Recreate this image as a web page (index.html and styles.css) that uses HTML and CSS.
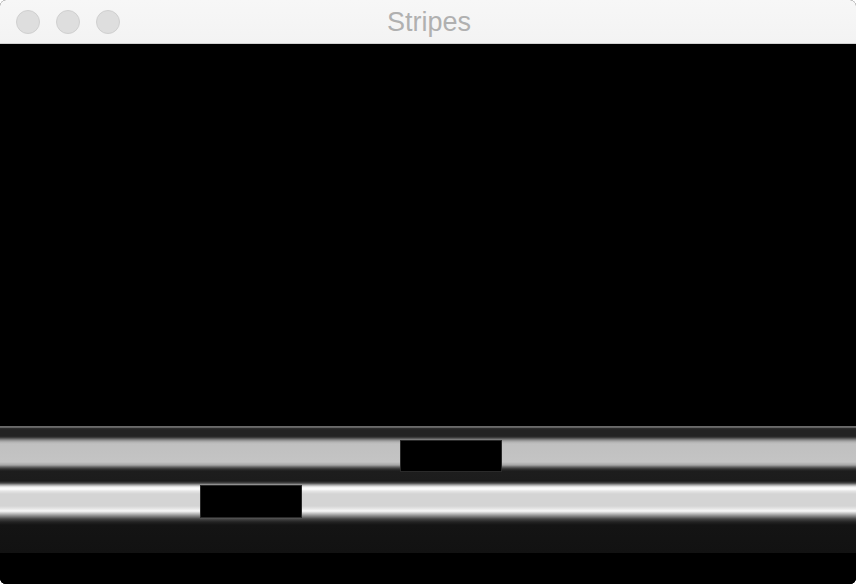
FILE: index.html
```html
<!DOCTYPE html>
<html>
<head>
<meta charset="utf-8">
<title>Stripes</title>
<link rel="stylesheet" href="styles.css">
</head>
<body>
<div class="window">
  <div class="titlebar">
    <div class="lights">
      <span class="light"></span>
      <span class="light"></span>
      <span class="light"></span>
    </div>
    <div class="title">Stripes</div>
  </div>
  <div class="content">
    <div class="spacer"></div>
    <div class="stripes">
      <div class="block block-one"></div>
      <div class="block block-two"></div>
    </div>
    <div class="bottom"></div>
  </div>
</div>
</body>
</html>
```

FILE: styles.css
```css
html, body {
  margin: 0;
  padding: 0;
  background: #ffffff;
  width: 856px;
  height: 584px;
  overflow: hidden;
}

.window {
  width: 856px;
  height: 584px;
  display: flex;
  flex-direction: column;
  border-radius: 6px;
  overflow: hidden;
  background: #000;
}

.titlebar {
  height: 43px;
  flex: 0 0 43px;
  background: linear-gradient(#f7f7f7, #f3f3f3);
  border-bottom: 1px solid #d2d2d2;
  display: flex;
  align-items: center;
  position: relative;
}

.lights {
  display: flex;
  gap: 16px;
  padding-left: 16px;
  align-items: center;
}

.light {
  width: 22px;
  height: 22px;
  border-radius: 50%;
  background: #dedede;
  border: 1px solid #d0d0d0;
}

.title {
  position: absolute;
  left: 0;
  right: 0;
  top: 0;
  bottom: 0;
  display: flex;
  align-items: center;
  justify-content: center;
  font-family: "Liberation Sans", Arial, sans-serif;
  font-size: 27px;
  color: #b0b0b0;
  padding-left: 2px;
  padding-top: 1px;
}

.content {
  flex: 1;
  display: flex;
  flex-direction: column;
  background: #000;
}

.spacer {
  flex: 0 0 381px;
  background: #000;
}

.stripes {
  height: 128px;
  flex: 0 0 128px;
  display: flex;
  flex-direction: column;
  background: linear-gradient(to bottom,
    #000000 0px, #000000 1px,
    #707070 1px, #5c5c5c 3px,
    #303030 3px, #222222 5px,
    #222222 11px, #2c2c2c 12px,
    #4a4a4a 13px, #8a8a8a 15px,
    #b2b2b2 17px, #c0c0c0 19px,
    #c4c4c4 37px, #a6a6a6 40px,
    #646464 42px, #323232 44px,
    #1d1d1d 46px, #1c1c1c 56px,
    #444444 58px, #a8a8a8 60px,
    #f2f2f2 62px, #ffffff 64px,
    #e6e6e6 66px, #d4d4d4 69px,
    #d4d4d4 81px, #e8e8e8 84px,
    #fafafa 86px, #cccccc 88px,
    #888888 91px, #444444 94px,
    #232323 97px, #141414 100px,
    #121212 128px);
}

.block {
  width: 100px;
  height: 30px;
  background: #000;
  border: 1px solid #2a2a2a;
}

.block-one {
  margin-left: 400px;
  margin-top: 15px;
}

.block-two {
  margin-left: 200px;
  margin-top: 13px;
  height: 31px;
}

.bottom {
  flex: 1;
  background: #000;
}
```
